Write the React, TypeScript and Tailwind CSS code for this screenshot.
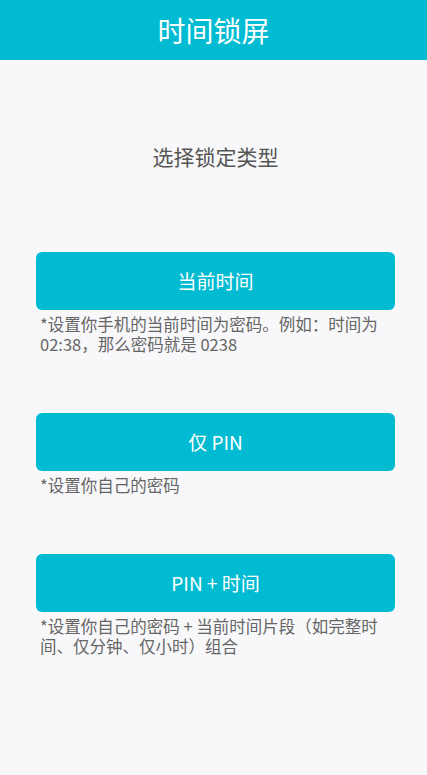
import React from 'react';

const options = [
  { label: '当前时间', desc: '*设置你手机的当前时间为密码。例如：时间为 02:38，那么密码就是 0238' },
  { label: '仅 PIN', desc: '*设置你自己的密码' },
  { label: 'PIN + 时间', desc: '*设置你自己的密码 + 当前时间片段（如完整时间、仅分钟、仅小时）组合' },
];

const App: React.FC = () => {
  return (
    <div
      className="min-h-[775px] w-full bg-[#f8f8fa]"
      style={{ fontFamily: '"Noto Sans CJK SC", "Noto Sans", sans-serif' }}
    >
      {/* Header */}
      <div className="h-[60px] bg-[#00bbd2] flex items-center justify-center">
        <h1 className="text-white text-[28px] leading-none">时间锁屏</h1>
      </div>

      <div className="pl-9 pr-8">
        <p className="pt-[83px] text-center text-[21px] leading-[26px] text-[#555]">选择锁定类型</p>

        <div className="mt-[83px] flex flex-col gap-[59px]">
          {options.map((o) => (
            <div key={o.label}>
              <button className="w-full h-[58px] rounded-md bg-[#00bbd2] text-white text-[19px] flex items-center justify-center">
                {o.label}
              </button>
              <p className="mt-1 pl-1 text-[16.5px] leading-[20px] text-[#666]">{o.desc}</p>
            </div>
          ))}
        </div>
      </div>
    </div>
  );
};

export default App;
